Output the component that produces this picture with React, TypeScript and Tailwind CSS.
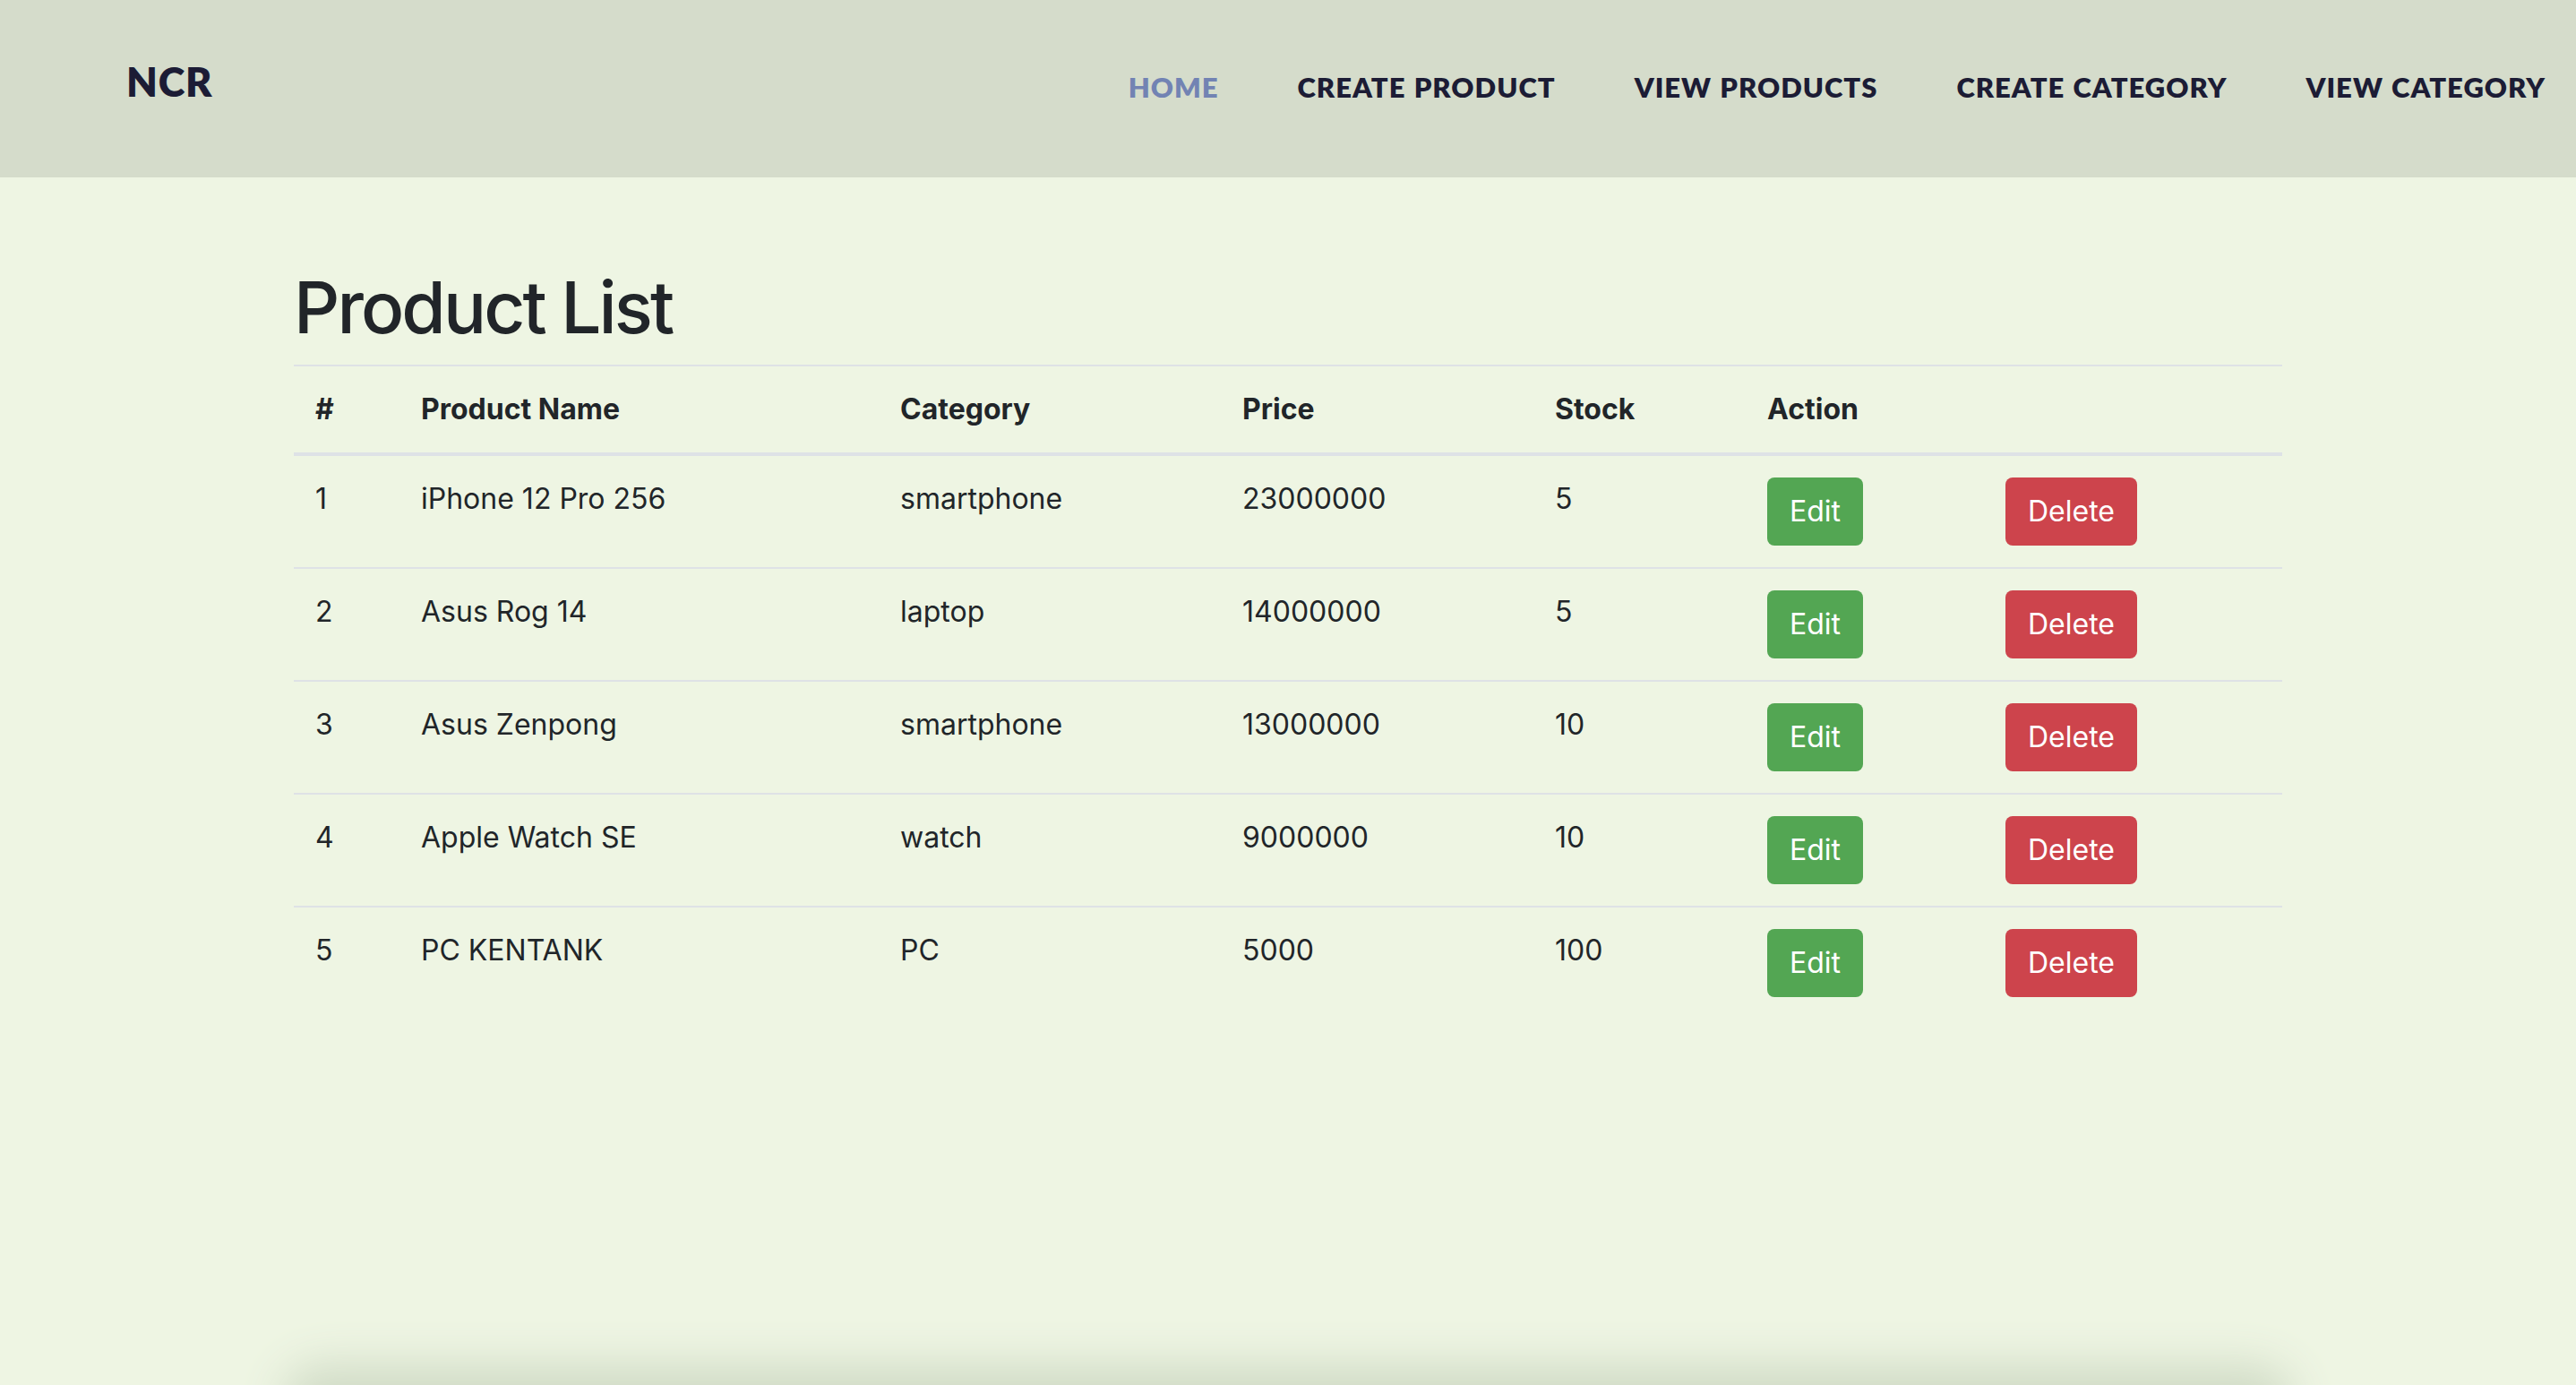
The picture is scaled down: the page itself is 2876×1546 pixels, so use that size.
const products = [
  { id: 1, name: "iPhone 12 Pro 256", category: "smartphone", price: 23000000, stock: 5 },
  { id: 2, name: "Asus Rog 14", category: "laptop", price: 14000000, stock: 5 },
  { id: 3, name: "Asus Zenpong", category: "smartphone", price: 13000000, stock: 10 },
  { id: 4, name: "Apple Watch SE", category: "watch", price: 9000000, stock: 10 },
  { id: 5, name: "PC KENTANK", category: "PC", price: 5000, stock: 100 },
];

const navLinks = ["HOME", "CREATE PRODUCT", "VIEW PRODUCTS", "CREATE CATEGORY", "VIEW CATEGORY"];

export default function App() {
  return (
    <div
      className="h-[1546px] overflow-hidden flex flex-col bg-[#eef5e3] text-[#212529]"
      style={{ fontFamily: "Inter, 'Liberation Sans', sans-serif" }}
    >
      {/* Navbar */}
      <header className="h-[198px] shrink-0 bg-[#d5dccb] flex items-center justify-between pl-[141px] pr-[34px]">
        <a
          className="text-[45px] font-extrabold tracking-[0.8px] text-[#1c1c35] mt-[-14px]"
          style={{ fontFamily: "Lato, 'DejaVu Sans', sans-serif" }}
        >
          NCR
        </a>
        <nav className="flex items-center gap-[88px] mt-[-4px]">
          {navLinks.map((l, i) => (
            <a
              key={l}
              className={`text-[31px] font-extrabold tracking-[1px] [word-spacing:1px] ${i === 0 ? "text-[#7283b3]" : "text-[#1c1c35]"}`}
              style={{ fontFamily: "Lato, 'DejaVu Sans', sans-serif" }}
            >
              {l}
            </a>
          ))}
        </nav>
      </header>

      {/* Content */}
      <main className="flex-1 w-[2280px] mx-auto px-[30px] pt-[97px]">
        <h1 className="text-[80px] font-medium leading-[1.2] mb-[16px] tracking-[-2.9px]">Product List</h1>
        <table className="w-full table-fixed border-collapse text-[32px] leading-[48px]">
          <colgroup>
            <col className="w-[118px]" />
            <col className="w-[535px]" />
            <col className="w-[382px]" />
            <col className="w-[349px]" />
            <col className="w-[237px]" />
            <col className="w-[266px]" />
            <col />
          </colgroup>
          <thead>
            <tr className="border-t-2 border-[#dee2e6]">
              <th className="text-left font-bold p-[24px] border-b-4 border-[#dee2e6]">#</th>
              <th className="text-left font-bold p-[24px] border-b-4 border-[#dee2e6]">Product Name</th>
              <th className="text-left font-bold p-[24px] border-b-4 border-[#dee2e6]">Category</th>
              <th className="text-left font-bold p-[24px] border-b-4 border-[#dee2e6]">Price</th>
              <th className="text-left font-bold p-[24px] border-b-4 border-[#dee2e6]">Stock</th>
              <th className="text-left font-bold p-[24px] border-b-4 border-[#dee2e6]">Action</th>
              <th className="p-[24px] border-b-4 border-[#dee2e6]"></th>
            </tr>
          </thead>
          <tbody>
            {products.map((p) => (
              <tr key={p.id} className="border-t-2 border-[#dee2e6] first:border-t-0 align-top">
                <td className="p-[24px]">{p.id}</td>
                <td className="p-[24px]">{p.name}</td>
                <td className="p-[24px]">{p.category}</td>
                <td className="p-[24px]">{p.price}</td>
                <td className="p-[24px]">{p.stock}</td>
                <td className="p-[24px]">
                  <button className="h-[76px] px-[25px] rounded-[8px] bg-[#53a653] text-white text-[32px] leading-[48px]">
                    Edit
                  </button>
                </td>
                <td className="p-[24px]">
                  <button className="h-[76px] px-[25px] rounded-[8px] bg-[#cd444c] text-white text-[32px] leading-[48px]">
                    Delete
                  </button>
                </td>
              </tr>
            ))}
          </tbody>
        </table>
      </main>

      {/* footer card just below the fold, only its shadow shows */}
      <div className="shrink-0 mx-auto w-[2200px] h-[40px] translate-y-[40px] rounded-[24px] bg-[#d5dfc9] shadow-[0_0_50px_22px_rgba(208,219,198,1)]" />
    </div>
  );
}
